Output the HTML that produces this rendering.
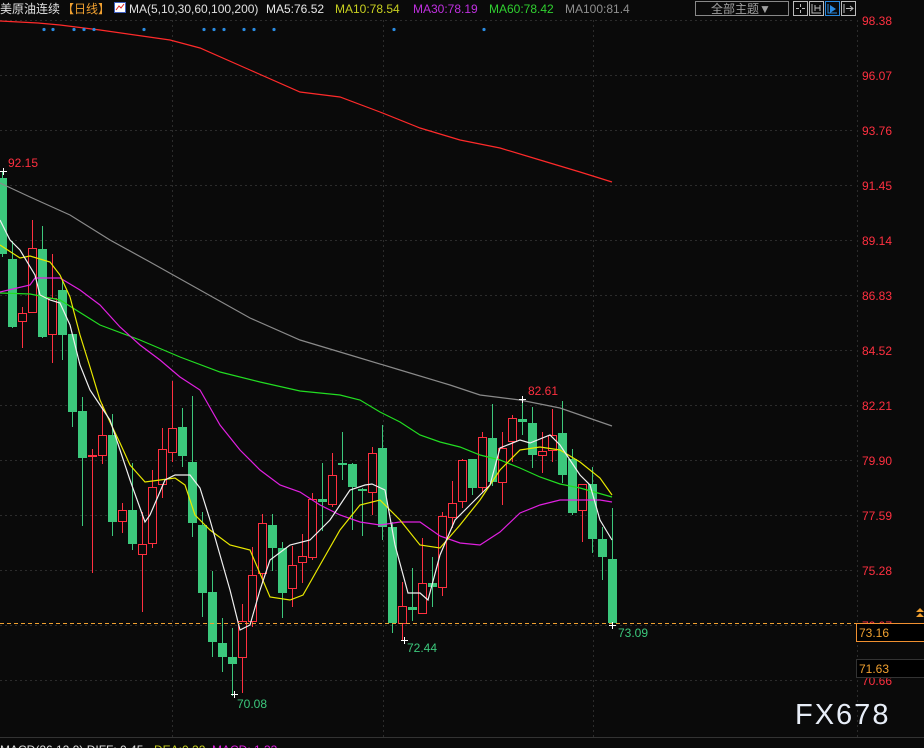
<!DOCTYPE html>
<html><head><meta charset="utf-8"><style>
html,body{margin:0;padding:0;background:#0a0a0a;width:924px;height:748px;overflow:hidden}
svg{display:block}
text{font-family:"Liberation Sans","Noto Sans CJK SC",sans-serif}
</style></head><body>
<svg id="s" width="924" height="748" xmlns="http://www.w3.org/2000/svg">
<rect width="924" height="748" fill="#0a0a0a"/>
<g stroke="#2c2c2c" stroke-dasharray="2,3" stroke-width="1">
<line x1="0" y1="20.5" x2="855" y2="20.5"/><line x1="0" y1="75.5" x2="855" y2="75.5"/><line x1="0" y1="130.5" x2="855" y2="130.5"/><line x1="0" y1="185.5" x2="855" y2="185.5"/><line x1="0" y1="240.5" x2="855" y2="240.5"/><line x1="0" y1="295.5" x2="855" y2="295.5"/><line x1="0" y1="350.5" x2="855" y2="350.5"/><line x1="0" y1="405.5" x2="855" y2="405.5"/><line x1="0" y1="460.5" x2="855" y2="460.5"/><line x1="0" y1="515.5" x2="855" y2="515.5"/><line x1="0" y1="570.5" x2="855" y2="570.5"/><line x1="0" y1="625.5" x2="855" y2="625.5"/><line x1="0" y1="680.5" x2="855" y2="680.5"/>
<line x1="172.5" y1="20" x2="172.5" y2="737"/><line x1="383.5" y1="20" x2="383.5" y2="737"/><line x1="593.5" y1="20" x2="593.5" y2="737"/><line x1="857.5" y1="20" x2="857.5" y2="737"/>
</g>
<line x1="0" y1="737.5" x2="924" y2="737.5" stroke="#333"/>
<g id="candles"></g>
<g fill="none" stroke-width="1.2">
<polyline stroke="#ff2a2a" points="0,21 38,23 60,25 100,30 170,40 200,48 250,70 300,92 340,97 380,112 420,128 460,140 500,148 540,160 580,172 612,182"/>
<polyline stroke="#8a8a8a" points="0,183 30,197 70,215 110,240 150,262 200,290 250,318 300,340 350,355 400,370 450,385 480,395 520,400 560,408 612,426"/>
<polyline stroke="#22dd22" points="0,293 30,294 60,300 100,325 140,340 180,357 220,372 260,382 300,391 340,395 360,400 380,412 400,422 420,435 440,442 460,447 480,455 500,460 520,468 540,477 560,484 580,488 612,497"/>
<polyline stroke="#e020e0" points="0,292 30,285 35,278 60,278 80,290 100,305 120,327 140,345 160,360 180,377 200,390 220,425 240,450 260,470 280,485 300,492 320,505 340,515 360,522 380,525 400,522 420,522 440,536 460,543 480,545 500,532 520,513 540,505 560,500 580,500 600,500 612,502"/>
<polyline stroke="#e8e800" points="0,245 20,258 30,256 50,262 60,275 70,297 80,335 90,367 100,400 110,422 120,443 130,465 145,482 160,480 175,478 185,485 195,515 210,530 230,545 250,550 270,597 290,600 303,595 320,565 340,530 360,505 380,500 400,520 420,545 440,548 460,525 480,500 500,470 520,450 540,447 560,450 580,462 600,478 612,495"/>
<polyline stroke="#f0f0f0" points="0,220 10,240 20,250 35,275 40,295 50,300 60,303 70,325 80,365 90,390 100,405 110,420 120,450 130,480 145,522 150,515 165,480 175,475 190,475 200,488 210,520 230,590 240,630 250,625 260,590 270,560 290,545 310,540 330,520 350,490 365,485 372,484 385,490 395,545 408,593 420,593 428,600 440,555 455,520 470,505 490,485 500,448 520,440 530,443 550,435 560,445 570,460 580,475 590,485 600,520 612,540"/>
</g>
<line x1="0" y1="623.5" x2="924" y2="623.5" stroke="#f0a030" stroke-dasharray="4,3"/>
<g fill="#2a8ae0" id="dots"></g>
<g font-size="12" fill="#ff3040">
<text x="862" y="25">98.38</text><text x="862" y="80">96.07</text><text x="862" y="135">93.76</text><text x="862" y="190">91.45</text><text x="862" y="245">89.14</text><text x="862" y="300">86.83</text><text x="862" y="355">84.52</text><text x="862" y="410">82.21</text><text x="862" y="465">79.90</text><text x="862" y="520">77.59</text><text x="862" y="575">75.28</text><text x="862" y="630">72.97</text><text x="862" y="685">70.66</text>
</g>
<rect x="856.5" y="623.5" width="70" height="18" fill="#000" stroke="#f09030"/>
<text x="859" y="637" font-size="12" fill="#f0a030">73.16</text>
<rect x="856.5" y="659.5" width="70" height="18" fill="#000" stroke="#333"/>
<text x="859" y="673" font-size="12" fill="#f0a030">71.63</text>
<path d="M916 612l4-4 4 4zM916 617l4-4 4 4z" fill="#f0a030"/>
<g font-size="12">
<text x="8" y="167" fill="#ff3040">92.15</text>
<text x="528" y="395" fill="#ff3040">82.61</text>
<text x="407" y="652" fill="#3cc87c">72.44</text>
<text x="237" y="708" fill="#3cc87c">70.08</text>
<text x="618" y="637" fill="#3cc87c">73.09</text>
</g>
<g stroke="#fff" stroke-width="1">
<path d="M0 171.5h7M3.5 168v7M519 399.5h7M522.5 396v7M401 640.5h7M404.5 637v7M231 694.5h7M234.5 691v7M609 625.5h7M612.5 622v7"/>
</g>
<text x="795" y="724" font-size="29" fill="#e8eef8" letter-spacing="2">FX678</text>
<g font-size="12">
<text x="0" y="13" fill="#e0e0e0">美原油连续</text>
<text x="62" y="13" fill="#f0a030">【日线】</text>
<rect x="114.5" y="2.5" width="11" height="10" fill="#fff" stroke="#4060c0"/>
<path d="M116 10l3-4 2 2 3-4" stroke="#e02020" fill="none"/>
<text x="129" y="13" fill="#e0e0e0">MA(5,10,30,60,100,200)</text>
<text x="266" y="13" fill="#e8e8e8">MA5:76.52</text>
<text x="335" y="13" fill="#c8d020">MA10:78.54</text>
<text x="413" y="13" fill="#c030e0">MA30:78.19</text>
<text x="489" y="13" fill="#30d030">MA60:78.42</text>
<text x="565" y="13" fill="#909090">MA100:81.4</text>
</g>
<rect x="695.5" y="1.5" width="93" height="14" fill="#0a0a0a" stroke="#888"/>
<text x="711" y="13" font-size="12" fill="#a0a0a0">全部主题▼</text>
<g fill="none" stroke="#bbb">
<rect x="793.5" y="1.5" width="14" height="14"/><path d="M800.5 4v3M800.5 10v3M796 8.5h3M802 8.5h3"/>
<rect x="809.5" y="1.5" width="14" height="14"/><path d="M812 4v9h9M815 5v6M815 8h5M820 5v6"/>
<rect x="825.5" y="1.5" width="14" height="14" stroke="#2a8ae0"/><path d="M828 4v9h9" stroke="#2a8ae0"/><path d="M830 5l6 4-6 4z" fill="#2a8ae0" stroke="none"/>
<rect x="841.5" y="1.5" width="14" height="14"/><path d="M844 4v9M846 8.5h7M850 6l3 2.5-3 2.5"/>
</g>
<g font-size="12">
<text x="0" y="754" fill="#e0e0e0">MACD(26,12,9) DIFF: 0.45</text>
<text x="154" y="754" fill="#c8d020">DEA:0.22</text>
<text x="212" y="754" fill="#e020e0">MACD: 1.33</text>
</g>
</svg>
<script>
var D=[[178,254,171,257,'g'],[259,327,241,328,'g'],[313,321,307,348,'r'],[248,312,220,312,'r'],[249,337,226,338,'g'],[298,334,254,363,'r'],[290,335,281,360,'g'],[334,412,334,427,'g'],[411,458,397,526,'g'],[455,456,449,573,'r'],[435,455,404,464,'r'],[435,522,414,536,'g'],[510,521,503,533,'r'],[510,544,463,550,'g'],[544,554,512,612,'r'],[487,543,470,548,'r'],[449,484,428,498,'r'],[428,452,381,462,'r'],[427,456,408,467,'g'],[462,523,396,537,'g'],[525,593,512,617,'g'],[592,642,571,657,'g'],[643,657,618,672,'g'],[657,664,628,696,'g'],[621,657,604,693,'r'],[575,621,547,627,'r'],[523,573,514,582,'r'],[525,548,514,571,'g'],[548,593,542,618,'g'],[565,588,546,607,'r'],[556,562,534,583,'r'],[499,557,493,560,'r'],[499,502,463,531,'g'],[475,504,453,507,'r'],[463,465,432,480,'g'],[464,487,463,530,'g'],[489,491,488,536,'g'],[453,492,447,515,'r'],[448,527,425,540,'g'],[527,623,522,633,'g'],[606,623,582,640,'r'],[607,610,568,621,'g'],[583,613,538,613,'r'],[583,587,557,607,'g'],[516,587,512,596,'r'],[503,517,481,528,'r'],[460,501,459,508,'r'],[459,488,459,495,'g'],[437,487,432,492,'r'],[438,482,404,486,'g'],[448,482,432,505,'r'],[418,441,415,462,'r'],[419,422,397,435,'g'],[423,455,407,468,'g'],[451,455,432,473,'r'],[435,450,409,462,'r'],[433,475,401,483,'g'],[459,513,449,515,'g'],[484,510,484,542,'r'],[484,539,467,553,'g'],[539,557,527,580,'g'],[559,623,508,625,'g']];
var g=document.getElementById('candles'),h='';
D.forEach(function(d,i){var x=-2+10*i,cx=x+4.5,col=d[4]=='g'?'#3cc87c':'#ff3040';
h+='<line x1="'+cx+'" y1="'+d[2]+'" x2="'+cx+'" y2="'+d[3]+'" stroke="'+col+'"/>';
if(d[4]=='g')h+='<rect x="'+x+'" y="'+d[0]+'" width="9" height="'+Math.max(2,d[1]-d[0])+'" fill="'+col+'"/>';
else h+='<rect x="'+(x+.5)+'" y="'+(d[0]+.5)+'" width="8" height="'+Math.max(1,d[1]-d[0])+'" fill="#0a0a0a" stroke="'+col+'"/>';});
g.innerHTML=h;
var dx=[44,53,74,84,94,144,204,214,224,244,254,274,394,484],s='';
dx.forEach(function(x){s+='<circle cx="'+x+'" cy="29.5" r="1.6"/>';});
document.getElementById('dots').innerHTML=s;
</script>
</body></html>
